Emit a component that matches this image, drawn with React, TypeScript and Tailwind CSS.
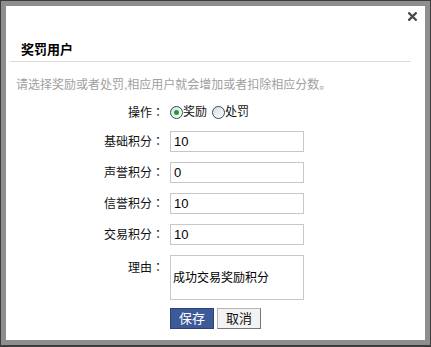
import { useState } from 'react';

const fields = [
  { label: '基础积分', value: '10' },
  { label: '声誉积分', value: '0' },
  { label: '信誉积分', value: '10' },
  { label: '交易积分', value: '10' },
];

function Label({ text, className = '' }: { text: string; className?: string }) {
  return (
    <span className={`w-[158px] text-right ${className}`}>
      {text}
      <span style={{ fontFamily: '"Noto Sans CJK TC", sans-serif' }}>：</span>
    </span>
  );
}

function Radio({ checked, label, onClick }: { checked: boolean; label: string; onClick: () => void }) {
  return (
    <button type="button" onClick={onClick} className="flex items-center">
      <span className="w-[13px] h-[13px] rounded-full border border-[#1c5180] bg-gradient-to-br from-[#dcdcd6] to-[#ffffff] flex items-center justify-center">
        {checked && <span className="w-[5px] h-[5px] rounded-full bg-[#21a121]" />}
      </span>
      <span>{label}</span>
    </button>
  );
}

export default function App() {
  const [mode, setMode] = useState<'reward' | 'punish'>('reward');

  return (
    <div
      className="w-[431px] h-[347px] bg-[#3c3c3c] pt-[1px] px-[1px] pb-[2px]"
      style={{ fontFamily: '"Liberation Sans", "Noto Sans CJK SC", sans-serif' }}
    >
      <div className="w-full h-full bg-[#8e8e8e] p-[5px]">
        <div className="relative w-full h-full bg-white text-[12px] text-[#111]">
          <button type="button" className="absolute top-[6px] right-[8px] w-[9px] h-[9px]">
            <svg viewBox="0 0 9 9" className="w-[9px] h-[9px]">
              <path d="M1.2 1.2 L7.8 7.8 M7.8 1.2 L1.2 7.8" stroke="#4a4a4a" strokeWidth="2.3" strokeLinecap="square" />
            </svg>
          </button>

          <div className="ml-[4px] mr-[14px] pl-[11px] pt-[35px] pb-[2px] leading-[18px] text-[13px] font-bold text-black border-b border-[#dcdcdc]">
            奖罚用户
          </div>

          <p className="mt-[14px] pl-[10px] leading-[18px] text-[#a0a0a0]">
            请选择奖励或者处罚,相应用户就会增加或者扣除相应分数。
          </p>

          <div className="mt-[9px] flex flex-col">
            <div className="flex items-center h-[18px]">
              <Label text="操作" />
              <div className="ml-[6px] flex items-center gap-[5px]">
                <Radio checked={mode === 'reward'} label="奖励" onClick={() => setMode('reward')} />
                <Radio checked={mode === 'punish'} label="处罚" onClick={() => setMode('punish')} />
              </div>
            </div>

            {fields.map((f) => (
              <div key={f.label} className="flex items-center h-[21px] mt-[10px]">
                <Label text={f.label} />
                <input
                  readOnly
                  defaultValue={f.value}
                  className="ml-[6px] w-[134px] h-[21px] border border-[#c8c8c8] px-[3px] text-[13px] text-black outline-none"
                />
              </div>
            ))}

            <div className="flex items-start mt-[10px]">
              <Label text="理由" className="pt-[3px] leading-[18px]" />
              <textarea
                readOnly
                defaultValue="成功交易奖励积分"
                className="ml-[6px] w-[134px] h-[45px] border border-[#c8c8c8] px-[2px] pt-[13px] leading-[18px] text-[12px] text-black resize-none outline-none"
              />
            </div>

            <div className="flex mt-[8px] ml-[164px] gap-[3px]">
              <button
                type="button"
                className="w-[44px] h-[21px] bg-[#3c5a98] border border-[#2b4275] text-white text-[13px] leading-none"
              >
                保存
              </button>
              <button
                type="button"
                className="w-[44px] h-[21px] bg-[#f3f3f3] border border-[#b4b4b4] border-r-[#777] border-b-[#777] text-[#111] text-[13px] leading-none"
              >
                取消
              </button>
            </div>
          </div>
        </div>
      </div>
    </div>
  );
}
